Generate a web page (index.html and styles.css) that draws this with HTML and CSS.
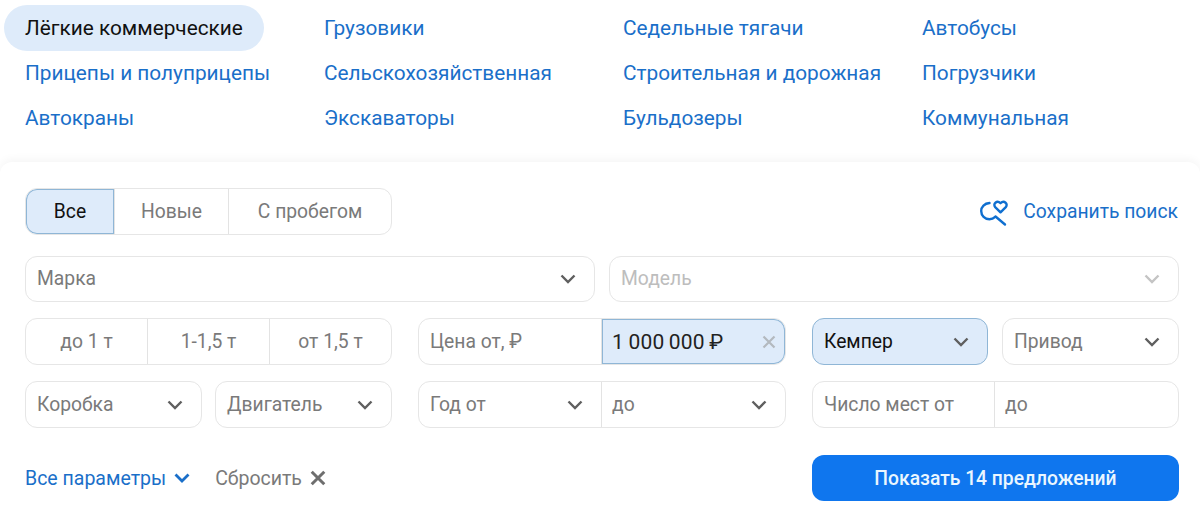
FILE: index.html
```html
<!DOCTYPE html>
<html lang="ru">
<head>
<meta charset="utf-8">
<title>Коммерческий транспорт</title>
<link rel="stylesheet" href="styles.css">
</head>
<body>
<nav class="cats">
  <a class="cat active">Лёгкие коммерческие</a><a class="cat">Грузовики</a><a class="cat">Седельные тягачи</a><a class="cat">Автобусы</a>
  <a class="cat">Прицепы и полуприцепы</a><a class="cat">Сельскохозяйственная</a><a class="cat">Строительная и дорожная</a><a class="cat">Погрузчики</a>
  <a class="cat">Автокраны</a><a class="cat">Экскаваторы</a><a class="cat">Бульдозеры</a><a class="cat">Коммунальная</a>
</nav>
<section class="panel">
  <div class="top">
    <div class="group state">
      <div class="cell sel w-all">Все</div><div class="cell w-new">Новые</div><div class="cell grow">С пробегом</div>
    </div>
    <a class="save">
      <svg class="save-ic" width="30" height="30" viewBox="0 0 30 30" fill="none" stroke="#0f6fd0" stroke-width="2.400" stroke-linecap="round" stroke-linejoin="round"><path d="M10.500 6C5.500 6.300 2.200 9.800 2.200 14c0 4.600 3.600 8.200 8.200 8.200 2.300 0 4.300-.9 5.800-2.300"/><path d="M16.500 19.500l9.500 8"/><path d="M21.500 15.300l-5.300-5.200c-2.700-3 1.600-7.300 5.300-3.900 3.700-3.400 8 .9 5.300 3.900z"/></svg>
      <span>Сохранить поиск</span>
    </a>
  </div>
  <div class="row-two">
    <div class="field">Марка<svg class="chev" viewBox="0 0 16 10"><path d="M1.500 1.500L8 8l6.500-6.500"/></svg></div>
    <div class="field off">Модель<svg class="chev" viewBox="0 0 16 10"><path d="M1.500 1.500L8 8l6.500-6.500"/></svg></div>
  </div>
  <div class="grid">
    <div class="group tons"><div class="cell">до 1 т</div><div class="cell">1-1,5 т</div><div class="cell">от 1,5 т</div></div>
    <div class="group split">
      <div class="part">Цена от, ₽</div>
      <div class="part filled"><span class="price">1 000 000 ₽</span><svg class="x-ic" viewBox="0 0 14 14"><path d="M1.500 1.500l11 11M12.500 1.500l-11 11"/></svg></div>
    </div>
    <div class="pair right">
      <div class="field on">Кемпер<svg class="chev" viewBox="0 0 16 10"><path d="M1.500 1.500L8 8l6.500-6.500"/></svg></div>
      <div class="field">Привод<svg class="chev" viewBox="0 0 16 10"><path d="M1.500 1.500L8 8l6.500-6.500"/></svg></div>
    </div>
    <div class="pair">
      <div class="field">Коробка<svg class="chev" viewBox="0 0 16 10"><path d="M1.500 1.500L8 8l6.500-6.500"/></svg></div>
      <div class="field">Двигатель<svg class="chev" viewBox="0 0 16 10"><path d="M1.500 1.500L8 8l6.500-6.500"/></svg></div>
    </div>
    <div class="group split">
      <div class="part">Год от<svg class="chev" viewBox="0 0 16 10"><path d="M1.500 1.500L8 8l6.500-6.500"/></svg></div>
      <div class="part">до<svg class="chev" viewBox="0 0 16 10"><path d="M1.500 1.500L8 8l6.500-6.500"/></svg></div>
    </div>
    <div class="group seats">
      <div class="part">Число мест от</div>
      <div class="part">до</div>
    </div>
  </div>
  <div class="bottom">
    <div class="links">
      <a class="more">Все параметры<svg class="chev blue" viewBox="0 0 16 10"><path d="M1.500 1.500L8 8l6.500-6.500"/></svg></a>
      <a class="reset">Сбросить<svg class="x-ic dark" viewBox="0 0 14 14"><path d="M1.500 1.500l11 11M12.500 1.500l-11 11"/></svg></a>
    </div>
    <button class="show">Показать 14 предложений</button>
  </div>
</section>
</body>
</html>
```
FILE: styles.css
```css
* { box-sizing: border-box; }
html, body { margin: 0; padding: 0; background: #fff; height: 514px; overflow: hidden; }
body { font-family: "Roboto", "Liberation Sans", sans-serif; font-size: 19.300px; color: #7a7a7a; }
.cats {
  display: grid;
  grid-template-columns: repeat(4, 299px);
  grid-auto-rows: 45px;
  padding: 5px 0 0 25px;
  height: 162px;
  align-content: start;
  font-size: 20.800px;
}
.cat { display: flex; align-items: center; height: 46px; color: #1a6fc9; }
.cat.active {
  color: #111;
  background: #deebfa;
  border-radius: 23px;
  margin-left: -21px;
  padding-left: 21px;
  width: 260px;
}
.panel {
  height: 352px;
  padding: 26px 21px 0 25px;
  border-radius: 12px 12px 0 0;
  background: #fff;
  box-shadow: 0 -3px 8px rgba(0, 0, 0, .04);
}
.top { display: flex; justify-content: space-between; align-items: center; height: 47px; }
.group {
  display: flex;
  height: 47px;
  border: 1px solid #e6e6e6;
  border-radius: 12px;
  overflow: hidden;
}
.state { width: 367px; }
.cell {
  flex: 1;
  display: flex;
  align-items: center;
  justify-content: center;
  border-left: 1px solid #e3e3e3;
}
.cell:first-child { border-left: 0; }
.w-all { flex: none; width: 88px; }
.w-new { flex: none; width: 114px; }
.grow { flex: 1; }
.sel { background: #deebfa; color: #111; box-shadow: inset 0 0 0 1px #8fb6d6; border-radius: 11px 0 0 11px; }
.save { display: flex; align-items: center; gap: 14px; color: #1a6fc9; margin-right: 1px; }
.save-ic { display: block; }
.row-two { display: grid; grid-template-columns: 570px 570px; gap: 14px; margin-top: 21px; }
.row-two .field { padding-bottom: 1px; }
.field {
  display: flex;
  align-items: center;
  justify-content: space-between;
  height: 46px;
  padding: 0 18px 0 11px;
  border: 1px solid #e6e6e6;
  border-radius: 12px;
}
.field.off { color: #bdbdbd; }
.field.off .chev { stroke: #c4c4c4; }
.field.on { background: #deebfa; color: #111; border-color: #8fb6d6; }
.chev { width: 16px; height: 10px; fill: none; stroke: #5f5f5f; stroke-width: 2.400; flex: none; }
.chev.blue { stroke: #1a6fc9; stroke-width: 2.800; }
.grid {
  display: grid;
  grid-template-columns: 367px 368px 367px;
  column-gap: 26px;
  row-gap: 16px;
  margin-top: 16px;
}
.grid .group { height: 47px; }
.pair { display: grid; grid-template-columns: 177px 177px; gap: 13px; }
.pair.right { grid-template-columns: 176px 177px; gap: 14px; }
.pair .field { height: 47px; }
.part {
  display: flex;
  align-items: center;
  justify-content: space-between;
  flex: none;
  width: 50%;
  padding: 0 18px 0 10px;
  border-left: 1px solid #e3e3e3;
}
.part:first-child { border-left: 0; width: 182px; padding-left: 11px; }
.part:last-child { flex: 1; width: auto; }
.seats .part:first-child { width: 181px; }
.filled { background: #deebfa; color: #222; box-shadow: inset 0 0 0 1px #8fb6d6; border-radius: 0 11px 11px 0; padding-right: 9px; }
.price { font-size: 21px; letter-spacing: .2px; word-spacing: -1px; }
.x-ic { width: 14px; height: 14px; fill: none; stroke: #b3b9bf; stroke-width: 2.200; flex: none; }
.x-ic.dark { stroke: #6e6e6e; stroke-width: 2.600; width: 16px; height: 16px; }
.bottom { display: flex; justify-content: space-between; align-items: center; margin-top: 27px; height: 46px; }
.links { display: flex; align-items: center; gap: 25px; font-size: 19.500px; }
.more { display: flex; align-items: center; gap: 8px; color: #1a6fc9; }
.reset { display: flex; align-items: center; gap: 8px; }
.show {
  width: 367px;
  height: 46px;
  border: 0;
  border-radius: 12px;
  background: #0f76ee;
  color: #eaf6ff;
  font: 500 19.300px "Roboto", "Liberation Sans", sans-serif;
}
```
